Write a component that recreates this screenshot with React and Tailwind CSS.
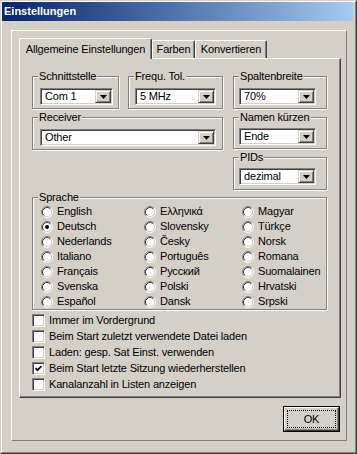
import { clsx } from "clsx";

const sunken =
  "border border-t-[#808080] border-l-[#808080] border-r-white border-b-white shadow-[inset_1px_1px_0_#404040,inset_-1px_-1px_0_#d4d0c8]";
const raised =
  "border border-t-[#d4d0c8] border-l-[#d4d0c8] border-r-[#404040] border-b-[#404040] shadow-[inset_1px_1px_0_#fff,inset_-1px_-1px_0_#808080]";

const languages = [
  ["English", false],
  ["Deutsch", true],
  ["Nederlands", false],
  ["Italiano", false],
  ["Français", false],
  ["Svenska", false],
  ["Español", false],
  ["Ελληνικά", false],
  ["Slovensky", false],
  ["Česky", false],
  ["Português", false],
  ["Русский", false],
  ["Polski", false],
  ["Dansk", false],
  ["Magyar", false],
  ["Türkçe", false],
  ["Norsk", false],
  ["Romana", false],
  ["Suomalainen", false],
  ["Hrvatski", false],
  ["Srpski", false],
];

const options = [
  ["Immer im Vordergrund", false],
  ["Beim Start zuletzt verwendete Datei laden", false],
  ["Laden: gesp. Sat Einst. verwenden", false],
  ["Beim Start letzte Sitzung wiederherstellen", true],
  ["Kanalanzahl in Listen anzeigen", false],
];

function Combo({ value, className }) {
  return (
    <div className={clsx("flex h-[17px] bg-white p-px", sunken, className)}>
      <span className="flex-1 pl-[3px] leading-[13px] whitespace-nowrap">{value}</span>
      <span className={clsx("flex h-[13px] w-[16px] items-center justify-center bg-[#d4d0c8]", raised)}>
        <svg width="7" height="4" viewBox="0 0 7 4">
          <path d="M0 0h7L3.5 4z" fill="#000" />
        </svg>
      </span>
    </div>
  );
}

function Group({ label, className, children }) {
  return (
    <div
      className={clsx(
        "relative border border-[#808080] shadow-[inset_1px_1px_0_#fff,1px_1px_0_#fff]",
        className,
      )}
    >
      <span className="absolute -top-[7px] left-[5px] bg-[#d4d0c8] px-px leading-[13px] whitespace-nowrap">
        {label}
      </span>
      {children}
    </div>
  );
}

function Radio({ label, checked }) {
  return (
    <div className="flex h-[15px] items-center gap-[4px] whitespace-nowrap">
      <svg width="12" height="12" viewBox="0 0 12 12" className="shrink-0">
        <circle cx="6" cy="6" r="4.5" fill="#fff" />
        <path d="M2.11 9.89A5.5 5.5 0 0 1 9.89 2.11" stroke="#808080" fill="none" />
        <path d="M9.89 2.11A5.5 5.5 0 0 1 2.11 9.89" stroke="#fff" fill="none" />
        <path d="M2.82 9.18A4.5 4.5 0 0 1 9.18 2.82" stroke="#404040" fill="none" />
        <path d="M9.18 2.82A4.5 4.5 0 0 1 2.82 9.18" stroke="#d4d0c8" fill="none" />
        {checked && <circle cx="6" cy="6" r="2" fill="#000" />}
      </svg>
      <span>{label}</span>
    </div>
  );
}

function Check({ label, checked }) {
  return (
    <div className="flex h-[16px] items-center gap-[4px] whitespace-nowrap">
      <span className={clsx("flex h-[13px] w-[13px] shrink-0 items-center justify-center bg-white", sunken)}>
        {checked && (
          <svg width="7" height="7" viewBox="0 0 7 7">
            <path d="M0.6 3.2L2.5 5.2L6.5 1.1" stroke="#000" strokeWidth="1.7" fill="none" />
          </svg>
        )}
      </span>
      <span>{label}</span>
    </div>
  );
}

export default function App() {
  return (
    <div className="h-[454px] w-[357px] bg-[#d4d0c8] font-['Liberation_Sans',Arial,sans-serif] text-[11px] leading-[13px] tracking-[-0.17px] text-black">
      <div className="h-full border border-t-[#d4d0c8] border-l-[#d4d0c8] border-r-[#404040] border-b-[#404040]">
        <div className="flex h-full flex-col border border-t-white border-l-white border-r-[#808080] border-b-[#808080] pr-[2px] pb-[2px]">
          {/* Title bar */}
          <div className="flex h-[19px] shrink-0 items-center bg-linear-to-r from-[#0a246a] to-[#a6caf0] pl-[2px] font-bold tracking-normal text-white">
            Einstellungen
          </div>

          <div className="flex-1 pl-[9px] pt-[9px]">
            {/* Frame */}
            <div className="h-[411px] w-[336px] border border-t-white border-l-white border-r-[#808080] border-b-[#808080] pl-[7px] pt-[7px]">
              {/* Tabs */}
              <div className="flex h-[20px] w-[322px] items-end">
                <div className="relative z-10 -mb-px flex h-[21px] w-[133px] items-center justify-center rounded-t-[2px] border-t border-l border-r border-t-white border-l-white border-r-[#404040] bg-[#d4d0c8] shadow-[inset_-1px_0_0_#808080]">
                  Allgemeine Einstellungen
                </div>
                <div className="flex h-[18px] w-[43px] items-center justify-center rounded-t-[2px] border-t border-l border-r border-t-white border-l-white border-r-[#404040] shadow-[inset_-1px_0_0_#808080]">
                  Farben
                </div>
                <div className="flex h-[18px] w-[72px] items-center justify-center rounded-t-[2px] border-t border-l border-r border-t-white border-l-white border-r-[#404040] shadow-[inset_-1px_0_0_#808080]">
                  Konvertieren
                </div>
              </div>

              {/* Panel */}
              <div className="h-[340px] w-[322px] border border-t-white border-l-white border-r-[#404040] border-b-[#404040] pl-[12px] pt-[17px] shadow-[inset_-1px_-1px_0_#808080]">
                <div className="flex gap-[10px]">
                  <div className="flex w-[191px] flex-col gap-[8px]">
                    <div className="flex gap-[9px]">
                      <Group label="Schnittstelle" className="h-[33px] w-[87px] pt-[11px]">
                        <Combo value="Com 1" className="ml-[7px] w-[73px]" />
                      </Group>
                      <Group label="Frequ. Tol." className="h-[33px] w-[95px] pt-[11px]">
                        <Combo value="5 MHz" className="ml-[6px] w-[81px]" />
                      </Group>
                    </div>
                    <Group label="Receiver" className="h-[33px] w-[191px] pt-[11px]">
                      <Combo value="Other" className="ml-[7px] w-[176px]" />
                    </Group>
                  </div>
                  <div className="flex w-[94px] flex-col">
                    <Group label="Spaltenbreite" className="h-[33px] pt-[11px]">
                      <Combo value="70%" className="ml-[5px] w-[77px]" />
                    </Group>
                    <Group label="Namen kürzen" className="mt-[8px] h-[32px] pt-[10px]">
                      <Combo value="Ende" className="ml-[5px] w-[77px]" />
                    </Group>
                    <Group label="PIDs" className="mt-[8px] h-[33px] pt-[10px]">
                      <Combo value="dezimal" className="ml-[5px] w-[77px]" />
                    </Group>
                  </div>
                </div>

                <Group label="Sprache" className="mt-[7px] h-[113px] w-[295px] pl-[8px] pt-[6px]">
                  <div className="grid grid-flow-col grid-cols-[103px_98px_1fr] grid-rows-7">
                    {languages.map(([name, checked]) => (
                      <Radio key={name} label={name} checked={checked} />
                    ))}
                  </div>
                </Group>

                <div className="mt-[2px] flex flex-col">
                  {options.map(([label, checked]) => (
                    <Check key={label} label={label} checked={checked} />
                  ))}
                </div>
              </div>

              {/* Buttons */}
              <div className="mt-[8px] flex w-[322px] justify-end">
                <button className="mr-px h-[26px] w-[57px] border border-black bg-[#d4d0c8] p-0">
                  <span className={clsx("flex h-full w-full items-center justify-center p-[2px]", "border border-t-white border-l-white border-r-[#404040] border-b-[#404040] shadow-[inset_-1px_-1px_0_#808080]")}>
                    <span className="flex h-full w-full items-center justify-center border border-dotted border-black">
                      OK
                    </span>
                  </span>
                </button>
              </div>
            </div>
          </div>
        </div>
      </div>
    </div>
  );
}
